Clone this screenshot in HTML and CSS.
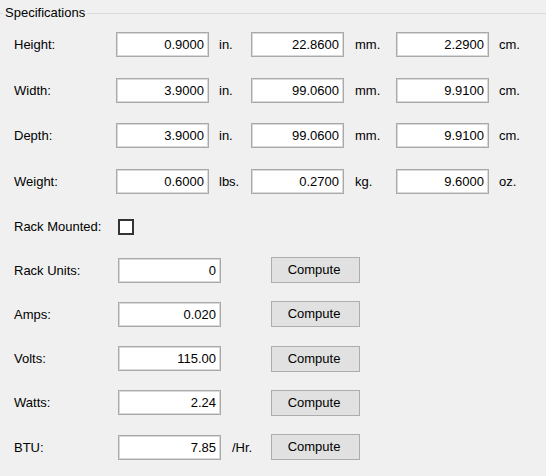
FILE: index.html
```html
<!DOCTYPE html>
<html>
<head>
<meta charset="utf-8">
<link rel="stylesheet" href="styles.css">
</head>
<body>
<fieldset class="group">
  <legend class="legend">Specifications</legend>
  <div class="content">
    <div class="dims">
      <div class="row">
        <span class="lbl">Height:</span>
        <div class="tb">0.9000</div><span class="u1">in.</span>
        <div class="tb">22.8600</div><span class="u2">mm.</span>
        <div class="tb">2.2900</div><span class="u3">cm.</span>
      </div>
      <div class="row">
        <span class="lbl">Width:</span>
        <div class="tb">3.9000</div><span class="u1">in.</span>
        <div class="tb">99.0600</div><span class="u2">mm.</span>
        <div class="tb">9.9100</div><span class="u3">cm.</span>
      </div>
      <div class="row">
        <span class="lbl">Depth:</span>
        <div class="tb">3.9000</div><span class="u1">in.</span>
        <div class="tb">99.0600</div><span class="u2">mm.</span>
        <div class="tb">9.9100</div><span class="u3">cm.</span>
      </div>
      <div class="row">
        <span class="lbl">Weight:</span>
        <div class="tb">0.6000</div><span class="u1">lbs.</span>
        <div class="tb">0.2700</div><span class="u2">kg.</span>
        <div class="tb">9.6000</div><span class="u3">oz.</span>
      </div>
    </div>
    <div class="rackrow">
      <span class="lbl2">Rack Mounted:</span>
      <span class="chk"></span>
    </div>
    <div class="elec">
      <div class="erow">
        <span class="lbl2">Rack Units:</span>
        <div class="tb2">0</div><span class="eu"></span>
        <div class="btn">Compute</div>
      </div>
      <div class="erow">
        <span class="lbl2">Amps:</span>
        <div class="tb2">0.020</div><span class="eu"></span>
        <div class="btn">Compute</div>
      </div>
      <div class="erow">
        <span class="lbl2">Volts:</span>
        <div class="tb2">115.00</div><span class="eu"></span>
        <div class="btn">Compute</div>
      </div>
      <div class="erow">
        <span class="lbl2">Watts:</span>
        <div class="tb2">2.24</div><span class="eu"></span>
        <div class="btn">Compute</div>
      </div>
      <div class="erow">
        <span class="lbl2">BTU:</span>
        <div class="tb2">7.85</div><span class="eu">/Hr.</span>
        <div class="btn">Compute</div>
      </div>
    </div>
  </div>
</fieldset>
</body>
</html>
```

FILE: styles.css
```css
html, body {
  margin: 0;
  padding: 0;
  background: #f0f0f0;
  width: 546px;
  height: 476px;
  overflow: hidden;
}
body {
  font-family: "Liberation Sans", Arial, sans-serif;
  font-size: 13px;
  color: #000;
}
.group {
  margin: 6px 0 0 0;
  padding: 12px 0 0 0;
  border: 0;
  border-top: 1px solid #dcdcdc;
  min-width: 0;
}
.legend {
  margin-left: 3px;
  padding: 0 2px;
  line-height: 14px;
  height: 14px;
}
.content {
  padding-left: 14px;
}
.dims {
  display: flex;
  flex-direction: column;
  gap: 20.5px;
}
.row {
  display: flex;
  align-items: center;
  height: 25px;
}
.lbl {
  width: 102px;
}
.tb, .tb2 {
  box-sizing: border-box;
  height: 25px;
  background: #fff;
  border: 1px solid #a9a9a9;
  box-shadow: inset 0 0 0 1px #d9d9d9;
  text-align: right;
  padding-right: 4px;
  line-height: 23px;
}
.tb {
  width: 93px;
}
.u1 {
  width: 42px;
  padding-left: 10px;
  box-sizing: border-box;
}
.u2 {
  width: 52px;
  padding-left: 11px;
  box-sizing: border-box;
}
.u3 {
  padding-left: 10px;
}
.rackrow {
  display: flex;
  align-items: center;
  height: 16px;
  margin-top: 25px;
}
.lbl2 {
  width: 104px;
}
.chk {
  box-sizing: border-box;
  width: 16px;
  height: 16px;
  border: 2px solid #333;
  background: #fff;
}
.elec {
  margin-top: 23px;
  display: flex;
  flex-direction: column;
  gap: 19.25px;
}
.erow {
  display: flex;
  align-items: center;
  height: 25px;
}
.tb2 {
  width: 103px;
}
.eu {
  width: 50px;
  padding-left: 11px;
  box-sizing: border-box;
}
.btn {
  box-sizing: border-box;
  width: 89px;
  height: 26px;
  background: #e1e1e1;
  border: 1px solid #adadad;
  text-align: center;
  line-height: 24px;
  padding-right: 3px;
}
```
